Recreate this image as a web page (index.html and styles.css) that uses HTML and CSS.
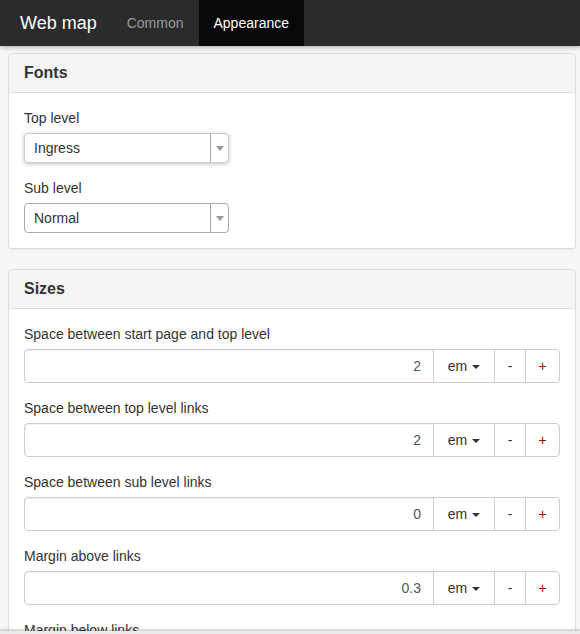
FILE: index.html
```html
<!DOCTYPE html>
<html lang="en">
<head>
    <meta charset="UTF-8">
    <meta name="viewport" content="width=device-width, initial-scale=1.0">
    <title>Web map</title>
    <link rel="stylesheet" href="styles.css">
</head>

<body>

    <nav class="navbar">
        <a class="brand" href="#">Web map</a>
        <a class="nav-link" href="#">Common</a>
        <a class="nav-link active" href="#">Appearance</a>
    </nav>

    <main class="page">
        <section class="panel">
            <div class="panel-heading">Fonts</div>
            <div class="panel-body">
                <div class="form-group">
                    <label>Top level</label>
                    <div class="select focused">
                        <span class="select-value">Ingress</span>
                        <span class="select-arrow"></span>
                    </div>
                </div>
                <div class="form-group">
                    <label>Sub level</label>
                    <div class="select">
                        <span class="select-value">Normal</span>
                        <span class="select-arrow"></span>
                    </div>
                </div>
            </div>
        </section>

        <section class="panel">
            <div class="panel-heading">Sizes</div>
            <div class="panel-body">
                <div class="form-group">
                    <label>Space between start page and top level</label>
                    <div class="input-group">
                        <input class="size-input" type="text" value="2">
                        <button type="button" class="btn unit">em <span class="caret"></span></button>
                        <button type="button" class="btn minus">-</button>
                        <button type="button" class="btn plus">+</button>
                    </div>
                </div>
                <div class="form-group">
                    <label>Space between top level links</label>
                    <div class="input-group">
                        <input class="size-input" type="text" value="2">
                        <button type="button" class="btn unit">em <span class="caret"></span></button>
                        <button type="button" class="btn minus">-</button>
                        <button type="button" class="btn plus">+</button>
                    </div>
                </div>
                <div class="form-group">
                    <label>Space between sub level links</label>
                    <div class="input-group">
                        <input class="size-input" type="text" value="0">
                        <button type="button" class="btn unit">em <span class="caret"></span></button>
                        <button type="button" class="btn minus">-</button>
                        <button type="button" class="btn plus">+</button>
                    </div>
                </div>
                <div class="form-group">
                    <label>Margin above links</label>
                    <div class="input-group">
                        <input class="size-input" type="text" value="0.3">
                        <button type="button" class="btn unit">em <span class="caret"></span></button>
                        <button type="button" class="btn minus">-</button>
                        <button type="button" class="btn plus">+</button>
                    </div>
                </div>
                <div class="form-group">
                    <label>Margin below links</label>
                </div>
            </div>
        </section>
    </main>

    <div class="bottom-bar"></div>

</body>
</html>
```

FILE: styles.css
```css
* {
    margin: 0;
    padding: 0;
    box-sizing: border-box;
}

html,
body {
    background-color: #f7f7f7;
    font-family: 'Liberation Sans', Arial, sans-serif;
    font-size: 14px;
    line-height: 20px;
    color: #333;
    overflow: hidden;
}

/* top bar */
.navbar {
    position: relative;
    z-index: 2;
    display: flex;
    height: 46px;
    padding-left: 5px;
    background-color: #2b2b2b;
    box-shadow: 0 1px 5px rgba(0, 0, 0, 0.35);
}

.navbar a {
    text-decoration: none;
}

.brand {
    padding: 12px 15px;
    font-size: 18px;
    line-height: 22px;
    color: #fff;
}

.nav-link {
    padding: 13px 15px;
    color: #9a9a9a;
}

.nav-link.active {
    background-color: #080808;
    color: #fff;
}

.page {
    padding: 7px 4px 0 8px;
}

/* panels */
.panel {
    background-color: #fff;
    border: 1px solid #ddd;
    border-radius: 4px;
    margin-bottom: 20px;
    box-shadow: 0 1px 1px rgba(0, 0, 0, 0.05);
}

.panel-heading {
    padding: 9px 15px 10px;
    background-color: #f5f5f5;
    border-bottom: 1px solid #ddd;
    border-radius: 3px 3px 0 0;
    font-size: 16px;
    font-weight: bold;
    line-height: 19px;
}

.panel-body {
    padding: 15px;
}

.form-group {
    margin-bottom: 15px;
}

.form-group:last-child {
    margin-bottom: 0;
}

label {
    display: block;
    margin-bottom: 5px;
}

/* font pickers */
.select {
    display: flex;
    width: 205px;
    height: 30px;
    border: 1px solid #aaa;
    border-radius: 4px;
    background-color: #fff;
}

.select.focused {
    border-color: #ccc;
    box-shadow: 0 1px 4px rgba(0, 0, 0, 0.25);
}

.select-value {
    flex: 1;
    padding: 4px 9px;
}

.select-arrow {
    width: 18px;
    border-left: 1px solid #aaa;
    position: relative;
}

.select-arrow::after {
    content: '';
    position: absolute;
    left: 5px;
    top: 12px;
    border-left: 4px solid transparent;
    border-right: 4px solid transparent;
    border-top: 5px solid #999;
}

/* size inputs */
.input-group {
    display: flex;
    height: 34px;
}

.size-input {
    flex: 1;
    min-width: 0;
    padding: 6px 12px;
    border: 1px solid #ccc;
    border-radius: 4px 0 0 4px;
    font-family: inherit;
    font-size: 14px;
    color: #555;
    text-align: right;
    box-shadow: inset 0 1px 1px rgba(0, 0, 0, 0.075);
    outline: none;
}

.btn {
    padding: 6px 12px;
    margin-left: -1px;
    background-color: #fff;
    border: 1px solid #ccc;
    font-family: inherit;
    font-size: 14px;
    line-height: 20px;
    color: #333;
    cursor: pointer;
}

.btn.unit {
    width: 62px;
}

.btn.minus {
    width: 32px;
}

.btn.plus {
    width: 35px;
    color: #a00;
    border-radius: 0 4px 4px 0;
}

.caret {
    display: inline-block;
    margin-left: 1px;
    vertical-align: middle;
    border-left: 4px solid transparent;
    border-right: 4px solid transparent;
    border-top: 4px solid #333;
}

/* strip along the window's bottom edge */
.bottom-bar {
    position: fixed;
    left: 0;
    right: 0;
    bottom: 0;
    height: 3px;
    background-color: #ececec;
    box-shadow: 0 -1px 3px rgba(0, 0, 0, 0.3);
}
```
